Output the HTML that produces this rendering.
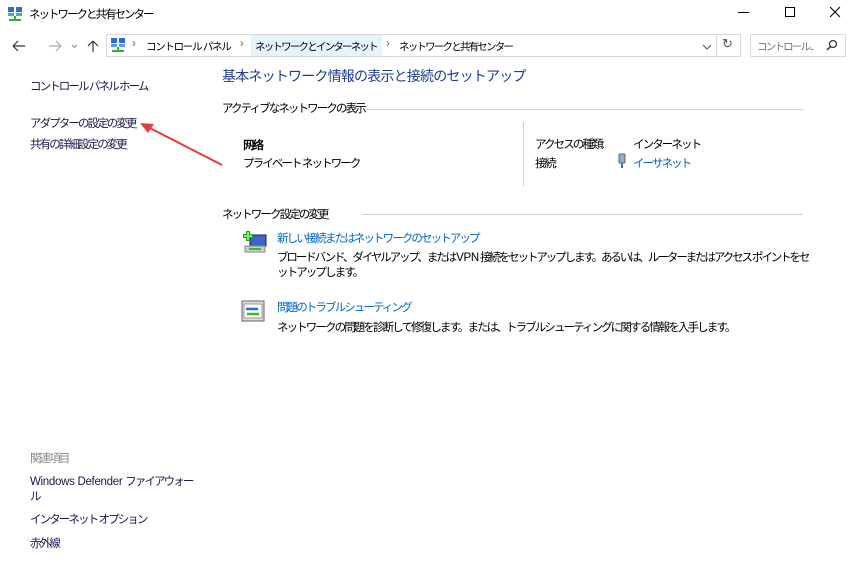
<!DOCTYPE html>
<html><head><meta charset="utf-8"><style>
*{margin:0;padding:0;box-sizing:border-box}
body{width:859px;height:570px;background:#fff;font-family:"Liberation Sans","Noto Sans CJK JP",sans-serif;font-size:11.5px;letter-spacing:-1.9px;color:#000;position:relative;overflow:hidden}
.a{position:absolute;white-space:nowrap}
.lnk{color:#1a1a4a}
.blue{color:#0066cc}
.hr{position:absolute;height:1px;background:#d0d0d0}
.bc{font-size:10.5px;letter-spacing:-1.8px}
.lat{letter-spacing:-0.3px}
</style></head><body>
<svg class="a" style="left:7px;top:6px" width="16" height="16" viewBox="0 0 16 16">
<rect x="1" y="1" width="6" height="5" fill="#2a6fd0"/><rect x="9" y="1" width="6" height="5" fill="#2a6fd0"/>
<rect x="1" y="7" width="6" height="3" fill="#5a9ae0"/><rect x="9" y="7" width="6" height="3" fill="#5a9ae0"/>
<rect x="7" y="10" width="2" height="3" fill="#3a3"/><rect x="2" y="13" width="12" height="2" fill="#3a3"/></svg>
<div class="a" style="left:29px;top:6px;font-size:11.5px;letter-spacing:-2px">ネットワークと共有センター</div>
<div class="a" style="left:738px;top:12px;width:11px;height:1px;background:#000"></div>
<div class="a" style="left:785px;top:7px;width:10px;height:10px;border:1px solid #000"></div>
<svg class="a" style="left:829px;top:6px" width="12" height="12"><path d="M1 1L11 11M11 1L1 11" stroke="#000" stroke-width="1"/></svg>
<svg class="a" style="left:10px;top:38px" width="90" height="16">
<path d="M3 8H15M3 8L8 3M3 8L8 13" stroke="#333" fill="none" stroke-width="1.2"/>
<path d="M39 8H51M51 8L46 3M51 8L46 13" stroke="#aaa" fill="none" stroke-width="1.2"/>
<path d="M62 7L64.5 9.5L67 7" stroke="#888" fill="none"/>
<path d="M83 14V3M83 3L78 8M83 3L88 8" stroke="#333" fill="none" stroke-width="1.2"/></svg>
<div class="a" style="left:106px;top:34px;width:611px;height:23px;border:1px solid #d9d9d9"></div>
<div class="a" style="left:251px;top:35px;width:131px;height:21px;background:#e5f3fb"></div>
<svg class="a" style="left:110px;top:37px" width="16" height="16" viewBox="0 0 16 16">
<rect x="1" y="1" width="6" height="5" fill="#2a6fd0"/><rect x="9" y="1" width="6" height="5" fill="#2a6fd0"/>
<rect x="1" y="7" width="6" height="3" fill="#5a9ae0"/><rect x="9" y="7" width="6" height="3" fill="#5a9ae0"/>
<rect x="7" y="10" width="2" height="3" fill="#3a3"/><rect x="2" y="13" width="12" height="2" fill="#3a3"/></svg>
<div class="a" style="left:132px;top:38px;color:#666">›</div>
<div class="a bc" style="left:146px;top:39px;letter-spacing:-1.3px">コントロール パネル</div>
<div class="a" style="left:240px;top:38px;color:#666">›</div>
<div class="a bc" style="left:255px;top:39px">ネットワークとインターネット</div>
<div class="a" style="left:386px;top:38px;color:#666">›</div>
<div class="a bc" style="left:399px;top:39px">ネットワークと共有センター</div>
<svg class="a" style="left:702px;top:43px" width="10" height="8"><path d="M1 2L5 6L9 2" stroke="#555" fill="none"/></svg>
<div class="a" style="left:716px;top:34px;width:25px;height:23px;border:1px solid #d9d9d9"></div>
<div class="a" style="left:722px;top:36px;font-size:13px;color:#555">↻</div>
<div class="a" style="left:750px;top:34px;width:96px;height:23px;border:1px solid #d9d9d9;background:#fff"></div>
<div class="a bc" style="left:757px;top:39px;color:#777">コントロール...</div>
<svg class="a" style="left:826px;top:39px" width="12" height="12"><circle cx="7" cy="5" r="3.5" stroke="#333" fill="none" stroke-width="1.3"/><path d="M4.5 7.5L1 11" stroke="#333" stroke-width="1.5"/></svg>
<div class="a lnk" style="left:30px;top:78px">コントロール パネル ホーム</div>
<div class="a lnk" style="left:30px;top:115px">アダプターの設定の変更</div>
<div class="a lnk" style="left:30px;top:136px">共有の詳細設定の変更</div>
<div class="a" style="left:30px;top:450px;color:#888">関連項目</div>
<div class="a lnk" style="left:30px;top:473px"><span class="lat">Windows Defender </span>ファイアウォー</div>
<div class="a lnk" style="left:30px;top:488px">ル</div>
<div class="a lnk" style="left:30px;top:511px">インターネット オプション</div>
<div class="a lnk" style="left:30px;top:535px">赤外線</div>
<svg class="a" style="left:130px;top:115px" width="100" height="60"><path d="M92 50L14 10" stroke="#e83a3a" stroke-width="2"/><path d="M10 8L24 9L18 18Z" fill="#e83a3a"/></svg>
<div class="a" style="left:222px;top:66px;font-size:14px;letter-spacing:-0.8px;color:#1e3e8c">基本ネットワーク情報の表示と接続のセットアップ</div>
<div class="a" style="left:222px;top:100px">アクティブなネットワークの表示</div>
<div class="hr" style="left:367px;top:109px;width:436px"></div>
<div class="a" style="left:243px;top:137px;font-weight:bold">网络</div>
<div class="a" style="left:243px;top:155px">プライベート ネットワーク</div>
<div class="a" style="left:523px;top:122px;width:1px;height:64px;background:#ccc"></div>
<div class="a" style="left:535px;top:136px">アクセスの種類:</div>
<div class="a" style="left:633px;top:136px">インターネット</div>
<div class="a" style="left:535px;top:155px">接続:</div>
<svg class="a" style="left:617px;top:153px" width="10" height="16"><rect x="2" y="1" width="6" height="9" rx="1" fill="#9ab" stroke="#567"/><rect x="4" y="10" width="2" height="5" fill="#37c"/></svg>
<div class="a blue" style="left:633px;top:155px">イーサネット</div>
<div class="a" style="left:222px;top:206px">ネットワーク設定の変更</div>
<div class="hr" style="left:362px;top:214px;width:441px"></div>
<svg class="a" style="left:241px;top:230px" width="28" height="26"><rect x="9" y="5" width="16" height="11" fill="#3a66c8" stroke="#223"/><rect x="4" y="16" width="20" height="6" fill="#ccc" stroke="#888"/><path d="M8 19H20" stroke="#3b3" stroke-width="2"/><path d="M7 1V11M2 6H12" stroke="#2a2" stroke-width="4"/><path d="M7 2V10M3 6H11" stroke="#7e6" stroke-width="2"/></svg>
<div class="a blue" style="left:277px;top:230px">新しい接続またはネットワークのセットアップ</div>
<div class="a" style="left:277px;top:249px;letter-spacing:-2.1px">ブロードバンド、ダイヤルアップ、または <span class="lat">VPN</span> 接続をセットアップします。あるいは、ルーターまたはアクセス ポイントをセ</div>
<div class="a" style="left:277px;top:264px">ットアップします。</div>
<svg class="a" style="left:241px;top:300px" width="24" height="22"><rect x="1" y="1" width="22" height="20" fill="#ddd" stroke="#666"/><rect x="3" y="4" width="18" height="14" fill="#fff" stroke="#999"/><path d="M5 9H17" stroke="#36c" stroke-width="2.5"/><path d="M6 14H18" stroke="#3b3" stroke-width="2.5"/></svg>
<div class="a blue" style="left:277px;top:299px">問題のトラブルシューティング</div>
<div class="a" style="left:277px;top:319px">ネットワークの問題を診断して修復します。または、トラブルシューティングに関する情報を入手します。</div>
</body></html>
